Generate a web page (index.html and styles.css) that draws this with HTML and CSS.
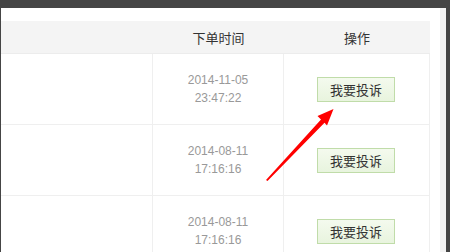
FILE: index.html
```html
<!DOCTYPE html>
<html lang="zh-CN">
<head>
<meta charset="utf-8">
<title>订单</title>
<link rel="stylesheet" href="styles.css">
</head>
<body>
<div class="frame">
  <div class="panel">
    <div class="table">
      <div class="row head">
        <div class="cell"></div>
        <div class="cell">下单时间</div>
        <div class="cell">操作</div>
      </div>
      <div class="row">
        <div class="cell"></div>
        <div class="cell date">2014-11-05<br>23:47:22</div>
        <div class="cell"><button class="btn">我要投诉</button></div>
      </div>
      <div class="row">
        <div class="cell"></div>
        <div class="cell date">2014-08-11<br>17:16:16</div>
        <div class="cell"><button class="btn">我要投诉</button></div>
      </div>
      <div class="row">
        <div class="cell"></div>
        <div class="cell date">2014-08-11<br>17:16:16</div>
        <div class="cell"><button class="btn">我要投诉</button></div>
      </div>
    </div>
  </div>
  <div class="track"></div>
</div>
<svg class="arrow" width="450" height="252" viewBox="0 0 450 252">
  <polygon points="266,180 321,119.5 317.5,116 333.5,109 327,125.5 324.5,122.8 267.5,181" fill="#ff0000"/>
</svg>
</body>
</html>
```

FILE: styles.css
```css
html, body {
  margin: 0;
  padding: 0;
  width: 450px;
  height: 252px;
  overflow: hidden;
  background: #454545;
  font-family: "Noto Sans CJK SC", "Liberation Sans", sans-serif;
}

.frame {
  display: flex;
  margin-top: 8px;
  margin-left: 1px;
  height: 244px;
}

.panel {
  width: 429px;
  padding: 13px 10px 0 0;
  background: #ffffff;
  overflow: hidden;
}

.track {
  width: 6px;
  background: #f3f3f3;
}

.table {
  display: flex;
  flex-direction: column;
}

.row {
  display: grid;
  grid-template-columns: 152px 131px 146px;
  height: 70px;
  border-bottom: 1px solid #efefef;
}

.row .cell {
  border-right: 1px solid #efefef;
  display: flex;
  align-items: center;
  justify-content: center;
  text-align: center;
}

.row.head {
  height: 32px;
  background: #f4f4f4;
  border-bottom: 1px solid #ececec;
}

.row.head .cell {
  border-right: none;
  font-size: 13px;
  color: #333333;
}

.date {
  font-family: "Liberation Sans", Arial, sans-serif;
  font-size: 12px;
  line-height: 18px;
  color: #999999;
}

.btn {
  width: 78px;
  height: 25px;
  margin: 0 0 0 -1px;
  padding: 0;
  border: 1px solid #c0dca9;
  background: linear-gradient(#f4faee, #e8f4de);
  font-family: "Noto Sans CJK SC", sans-serif;
  font-size: 13px;
  color: #333333;
  border-radius: 0;
}

.arrow {
  position: absolute;
  left: 0;
  top: 0;
}
```
